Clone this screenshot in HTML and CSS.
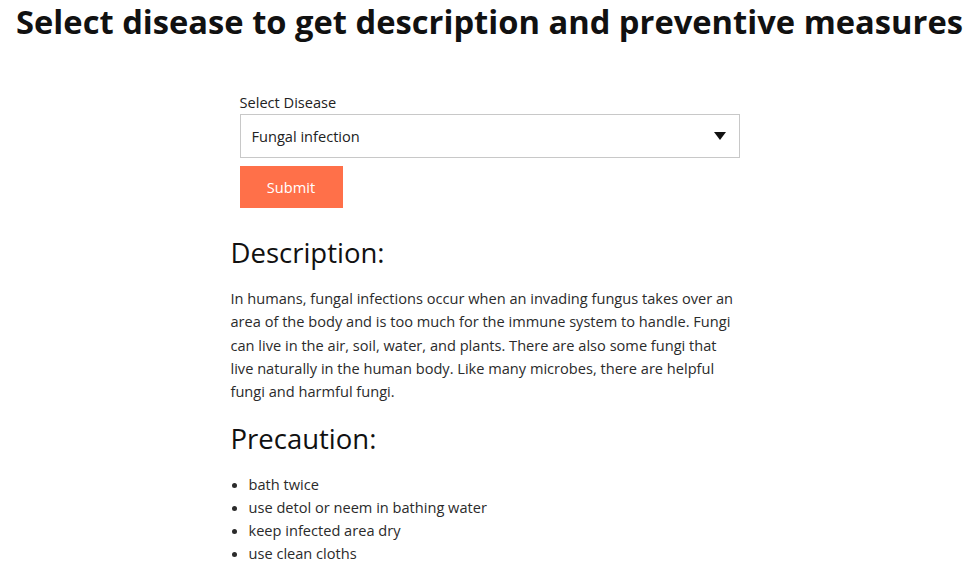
FILE: index.html
```html
<!DOCTYPE html>
<html lang="en">
<head>
<meta charset="utf-8">
<title>Disease description</title>
<link rel="stylesheet" href="styles.css">
</head>
<body>
<h1 class="title">Select disease to get description and preventive measures</h1>
<main class="content">
  <form class="form">
    <label class="label" for="disease">Select Disease</label>
    <div class="select-wrap">
      <select class="select" id="disease">
        <option>Fungal infection</option>
      </select>
      <svg class="caret" width="12" height="8" viewBox="0 0 12 8"><path d="M0 0H12L6 8Z" fill="#111"/></svg>
    </div>
    <button class="submit" type="button">Submit</button>
  </form>
  <h2 class="section section-first">Description:</h2>
  <p class="text">In humans, fungal infections occur when an invading fungus takes over an area of the body and is too much for the immune system to handle. Fungi can live in the air, soil, water, and plants. There are also some fungi that live naturally in the human body. Like many microbes, there are helpful fungi and harmful fungi.</p>
  <h2 class="section">Precaution:</h2>
  <ul class="list">
    <li>bath twice</li>
    <li>use detol or neem in bathing water</li>
    <li>keep infected area dry</li>
    <li>use clean cloths</li>
  </ul>
</main>
</body>
</html>
```
FILE: styles.css
```css
body {
  margin: 0;
  font-family: "Open Sans", "Liberation Sans", sans-serif;
  color: #212121;
  background: #fff;
}
.title {
  margin: 0;
  padding-left: 4px;
  font-size: 32.7px;
  font-weight: 700;
  line-height: 44px;
  text-align: center;
  color: #111;
}
.content {
  width: 514px;
  margin: 0 auto;
  padding-top: 48px;
}
.form {
  display: flex;
  flex-direction: column;
  align-items: flex-start;
  padding-left: 9px;
}
.label {
  font-size: 14.6px;
  line-height: 20px;
  color: #222;
  margin-bottom: 2px;
}
.select-wrap {
  position: relative;
  width: 500px;
}
.select {
  appearance: none;
  -webkit-appearance: none;
  display: block;
  width: 500px;
  height: 44px;
  border: 1px solid #c8c8c8;
  border-radius: 0;
  background: #fff;
  font-family: inherit;
  font-size: 14.6px;
  color: #222;
  padding: 0 11px;
  margin: 0;
}
.caret {
  position: absolute;
  right: 14px;
  top: 18px;
  pointer-events: none;
}
.submit {
  margin-top: 8px;
  width: 103px;
  height: 42px;
  border: none;
  background: #ff7049;
  color: #fff;
  font-family: inherit;
  font-size: 14.6px;
}
.section {
  margin: 17px 0 0;
  font-size: 27.5px;
  font-weight: 400;
  line-height: 38px;
  color: #111;
}
.section-first {
  margin-top: 26px;
}
.text {
  max-width: 508px;
  margin: 15px 0 0;
  font-size: 14.6px;
  line-height: 23.25px;
  color: #2b2b2b;
}
.list {
  margin: 15px 0 0;
  padding-left: 18px;
  font-size: 14.6px;
  line-height: 23px;
  color: #2b2b2b;
}
```
